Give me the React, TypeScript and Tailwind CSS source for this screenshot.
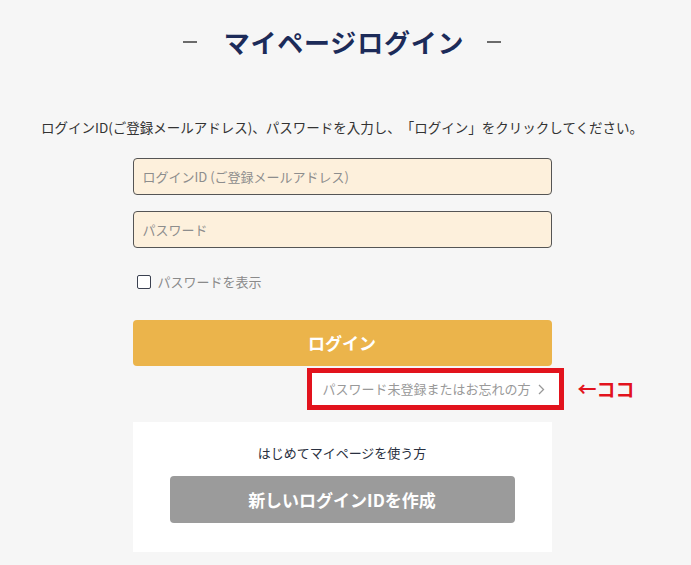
import React from "react";

export default function App() {
  return (
    <div
      className="min-h-[565px] w-full bg-[#f6f6f6] text-[#333]"
      style={{ fontFamily: '"Noto Sans CJK JP", "Noto Sans", sans-serif' }}
    >
      <div className="pr-[7px] pt-[24px] pb-[13px]">
        <div className="flex h-[36px] items-center justify-center">
          <span className="h-[2px] w-[14px] bg-[#6b6b6b]" />
          <h1 className="ml-[27px] mr-[23px] text-[26px] font-bold leading-[36px] tracking-[0.8px] text-[#1c2b59]">
            マイページログイン
          </h1>
          <span className="h-[2px] w-[14px] bg-[#6b6b6b]" />
        </div>

        <p className="mt-[57px] text-center text-[13.5px] leading-[20px] text-[#333] [text-spacing-trim:space-all]">
          ログインID(ご登録メールアドレス)、パスワードを入力し、「ログイン」をクリックしてください。
        </p>

        <div className="mx-auto mt-[21px] w-[419px]">
          <div className="flex h-[37px] items-center rounded-[4px] border-[1.5px] border-[#555] bg-[#fdf0dc] px-[9px] text-[13px] text-[#8d8d8d]">
            ログインID (ご登録メールアドレス)
          </div>
          <div className="mt-[16px] flex h-[37px] items-center rounded-[4px] border-[1.5px] border-[#555] bg-[#fdf0dc] px-[9px] text-[13px] text-[#8d8d8d]">
            パスワード
          </div>

          <label className="ml-[4px] mt-[24px] flex h-[20px] items-center gap-[7px] text-[13px] text-[#8a8a8a]">
            <span className="h-[14px] w-[14px] rounded-[2px] border-[1.5px] border-[#3a4050] bg-white" />
            パスワードを表示
          </label>

          <button className="mt-[28px] flex h-[46px] w-full items-center justify-center rounded-[4px] bg-[#ebb44b] text-[17px] font-bold text-white">
            ログイン
          </button>

          <div className="mr-[-12px] mt-[2px] flex justify-end">
            <div className="relative">
              <div className="flex h-[42px] w-[257px] items-center border-[5px] border-[#e2131d] bg-white pl-[11px] text-[13px] text-[#999]">
                パスワード未登録またはお忘れの方
                <svg
                  className="ml-[7px]"
                  width="7"
                  height="11"
                  viewBox="0 0 7 11"
                  fill="none"
                  stroke="#999"
                  strokeWidth="1.3"
                >
                  <path d="M1 1l4.5 4.5L1 10" />
                </svg>
              </div>
              <span className="absolute left-full top-[7px] ml-[14px] whitespace-nowrap text-[19px] font-bold leading-[28px] text-[#e2131d]">
                ←ココ
              </span>
            </div>
          </div>

          <div className="mt-[12px] bg-white px-[37px] pb-[29px] pt-[21px]">
            <p className="text-center text-[13px] leading-[20px] text-[#2a3040]">
              はじめてマイページを使う方
            </p>
            <button className="mt-[13px] flex h-[47px] w-full items-center justify-center rounded-[4px] bg-[#9b9b9b] text-[17px] font-bold text-white">
              新しいログインIDを作成
            </button>
          </div>
        </div>
      </div>
    </div>
  );
}
